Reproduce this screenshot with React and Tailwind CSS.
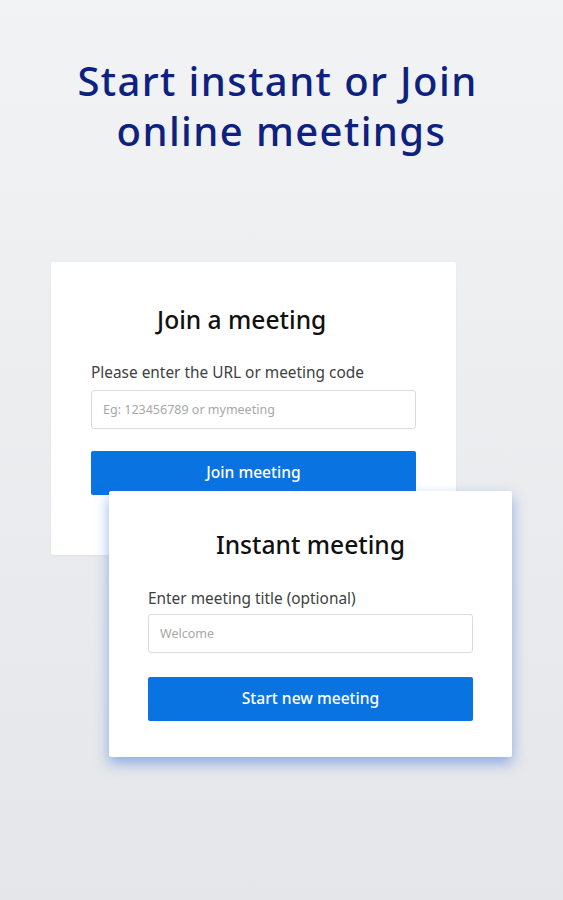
const Field = ({ label, placeholder, gap = "mt-[7px]" }) => (
  <div className="flex flex-col">
    <label className="text-[15.4px] leading-5 text-[#404040]">{label}</label>
    <input
      type="text"
      placeholder={placeholder}
      className={`${gap} h-[39px] w-full rounded-[3px] border border-[#d9dbde] bg-white px-[11px] text-[12.5px] text-[#333] placeholder:text-[#a8a8a8] focus:outline-none`}
    />
  </div>
);

const PrimaryButton = ({ children }) => (
  <button
    type="button"
    className="h-[44px] w-full rounded-[2px] bg-[#0a73e2] text-[15.6px] font-medium text-white"
  >
    {children}
  </button>
);

const App = () => {
  return (
    <div
      className="min-h-[900px] w-full bg-gradient-to-b from-[#f2f3f5] to-[#e4e6e9] pt-[56px]"
      style={{ fontFamily: '"Noto Sans", "Open Sans", sans-serif' }}
    >
      <h1 className="text-center text-[40px] font-medium leading-[50px] tracking-[1.4px] text-[#0c2180]">
        <span className="block pr-[8px]">Start instant or Join</span>
        <span className="block">online meetings</span>
      </h1>

      <div className="mt-[106px] ml-[51px] w-[405px] rounded-[2px] bg-white px-[40px] pt-[42px] pb-[60px] shadow-[0_1px_3px_rgba(0,0,0,0.04)]">
        <h2 className="ml-[66px] text-[24.6px] font-medium leading-8 text-[#111]">
          Join a meeting
        </h2>
        <div className="mt-[27px]">
          <Field
            label="Please enter the URL or meeting code"
            placeholder="Eg: 123456789 or mymeeting"
          />
        </div>
        <div className="mt-[22px]">
          <PrimaryButton>Join meeting</PrimaryButton>
        </div>
      </div>

      <div className="relative -mt-[64px] ml-[109px] w-[403px] rounded-[2px] bg-white px-[39px] pt-[38px] pb-[36px] shadow-[0_6px_14px_rgba(50,110,220,0.5)]">
        <h2 className="text-center text-[24.6px] font-medium leading-8 text-[#111]">
          Instant meeting
        </h2>
        <div className="mt-[28px]">
          <Field
            label="Enter meeting title (optional)"
            placeholder="Welcome"
            gap="mt-[5px]"
          />
        </div>
        <div className="mt-[24px]">
          <PrimaryButton>Start new meeting</PrimaryButton>
        </div>
      </div>
    </div>
  );
};

export default App;
